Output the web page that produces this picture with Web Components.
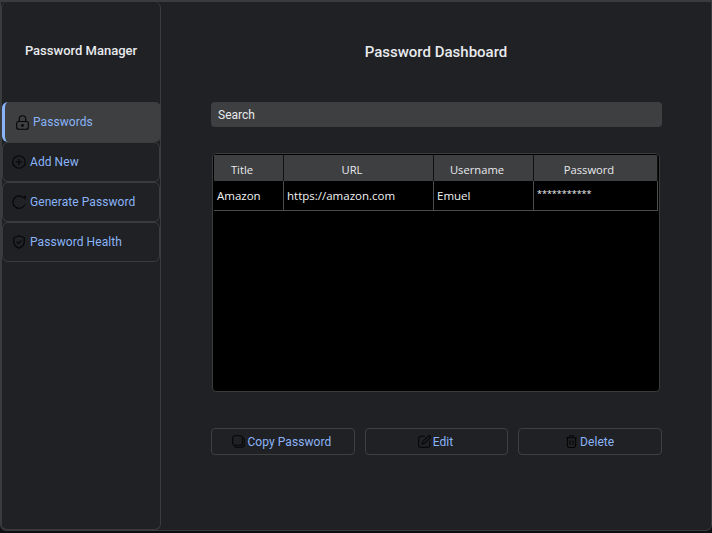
<!DOCTYPE html>
<html>
<head>
<meta charset="utf-8">
<title>Password Manager</title>
<style>
html, body { margin: 0; height: 100%; background: #0d0f12; }
body { overflow: hidden; }
</style>
</head>
<body>
<app-window>
    <side-bar slot="side" heading="Password Manager">
        <nav-item active label="Passwords" icon="lock"></nav-item>
        <nav-item label="Add New" icon="plus"></nav-item>
        <nav-item label="Generate Password" icon="refresh"></nav-item>
        <nav-item label="Password Health" icon="shield"></nav-item>
    </side-bar>
    <dash-board heading="Password Dashboard">
        <search-box placeholder="Search"></search-box>
        <password-table></password-table>
        <action-bar></action-bar>
    </dash-board>
</app-window>

<script>
const ICONS = {
    lock: '<svg width="13" height="15" viewBox="0 0 13 15"><path d="M3.2 6.5V4a3.3 3.3 0 0 1 6.6 0v2.5"/><rect x=".7" y="6.5" width="11.6" height="7.8" rx="2"/><circle cx="6.5" cy="10.4" r=".8" fill="#000"/></svg>',
    plus: '<svg width="14" height="14" viewBox="0 0 14 14"><circle cx="7" cy="7" r="6.3"/><path d="M7 4v6M4 7h6"/></svg>',
    refresh: '<svg width="14" height="14" viewBox="0 0 14 14"><path d="M12.8 9.6A6.2 6.2 0 1 1 11.4 2.6L13 1.2M13.2.6V4.4"/></svg>',
    shield: '<svg width="12" height="14" viewBox="0 0 12 14"><path d="M6 .8 11.2 2.6V7c0 3-2.2 5-5.2 6.2C3 12 .8 10 .8 7V2.6z"/><path d="M3.6 6.8 5.4 8.4 8.4 5.4"/></svg>',
    copy: '<svg width="13" height="13" viewBox="0 0 13 13"><rect x=".7" y=".7" width="9.6" height="9.6" rx="2"/><path d="M11.2 2.6c.7.4 1.1 1 1.1 1.8v5.4a2.5 2.5 0 0 1-2.5 2.5H4.4c-.8 0-1.4-.4-1.8-1.1"/></svg>',
    edit: '<svg width="13" height="13" viewBox="0 0 13 13"><path d="M7 1.2H2.6A1.9 1.9 0 0 0 .7 3.1v7.3c0 1 .9 1.9 1.9 1.9h7.3c1 0 1.9-.9 1.9-1.9V6"/><path d="M4.2 9 4.8 6.4 10.6.9c.4-.3.9-.3 1.2 0l.4.5c.3.4.3.9 0 1.2L6.6 8.3z"/></svg>',
    trash: '<svg width="11" height="13" viewBox="0 0 11 13"><path d="M.3 2.8h10.4M3.6 2.6V1.5c0-.5.3-.8.8-.8h2.2c.5 0 .8.3.8.8v1.1"/><path d="M1.4 2.8v8c0 1 .7 1.6 1.6 1.6h5c.9 0 1.6-.6 1.6-1.6v-8"/><path d="M4 5.2v4.8M7 5.2v4.8"/></svg>'
};

class AppWindow extends HTMLElement {
    constructor() {
        super();
        this.attachShadow({mode: 'open'});
        this.shadowRoot.innerHTML = `
        <style>
        :host {
            display : flex;
            box-sizing : border-box;
            width : 712px;
            height : 531px;
            background : #202124;
            border : 1px solid #3a3b3d;
            border-top-width : 2px;
            border-radius : 0 0 6px 6px;
            overflow : hidden;
            font-family : Roboto, "Liberation Sans", sans-serif;
        }
        </style>
        <slot name="side"></slot>
        <slot></slot>`;
    }
}
customElements.define('app-window', AppWindow);

class SideBar extends HTMLElement {
    constructor() {
        super();
        this.attachShadow({mode: 'open'});
        this.shadowRoot.innerHTML = `
        <style>
        :host {
            display : block;
            box-sizing : border-box;
            width : 160px;
            flex : none;
            border : 1px solid #3a3b3d;
            border-top : 0;
            border-radius : 6px;
        }
        h1 {
            margin : 0;
            height : 100px;
            box-sizing : border-box;
            padding-top : 41px;
            font-size : 13px;
            line-height : 16px;
            font-weight : 500;
            text-align : center;
            color : #e8eaed;
        }
        </style>
        <h1></h1>
        <slot></slot>`;
        this.shadowRoot.querySelector('h1').textContent = this.getAttribute('heading');
    }
}
customElements.define('side-bar', SideBar);

class NavItem extends HTMLElement {
    constructor() {
        super();
        this.attachShadow({mode: 'open'});
        this.shadowRoot.innerHTML = `
        <style>
        :host {
            display : flex;
            align-items : center;
            gap : 4px;
            box-sizing : border-box;
            height : 40px;
            padding-left : 9px;
            color : #8ab4f8;
            font-size : 12px;
            letter-spacing : 0.07px;
            border : 1px solid #3a3b3d;
            border-radius : 6px;
        }
        :host([active]) {
            background : #3e3f41;
            border : 0;
            border-left : 3px solid #8ab4f8;
            padding-left : 10px;
            margin-right : -1px;
        }
        .icon {
            display : flex;
            justify-content : center;
            width : 14px;
            flex : none;
        }
        svg {
            display : block;
            fill : none;
            stroke : #050506;
            stroke-width : 1.1;
        }
        </style>
        <span class="icon"></span>
        <span class="label"></span>`;
        this.shadowRoot.querySelector('.icon').innerHTML = ICONS[this.getAttribute('icon')];
        this.shadowRoot.querySelector('.label').textContent = this.getAttribute('label');
    }
}
customElements.define('nav-item', NavItem);

class DashBoard extends HTMLElement {
    constructor() {
        super();
        this.attachShadow({mode: 'open'});
        this.shadowRoot.innerHTML = `
        <style>
        :host {
            display : flex;
            flex-direction : column;
            flex : 1;
            box-sizing : border-box;
            padding : 0 49px 0 50px;
        }
        h2 {
            margin : 0;
            height : 100px;
            box-sizing : border-box;
            padding-top : 41px;
            padding-right : 1px;
            font-size : 15px;
            line-height : 18px;
            font-weight : 500;
            text-align : center;
            color : #e8eaed;
        }
        </style>
        <h2></h2>
        <slot></slot>`;
        this.shadowRoot.querySelector('h2').textContent = this.getAttribute('heading');
    }
}
customElements.define('dash-board', DashBoard);

class SearchBox extends HTMLElement {
    constructor() {
        super();
        this.attachShadow({mode: 'open'});
        this.shadowRoot.innerHTML = `
        <style>
        :host {
            display : flex;
            align-items : center;
            box-sizing : border-box;
            height : 25px;
            padding-left : 7px;
            background : #3e3f41;
            border-radius : 4px;
            font-size : 12px;
            color : #e8eaed;
        }
        </style>
        <span></span>`;
        this.shadowRoot.querySelector('span').textContent = this.getAttribute('placeholder');
    }
}
customElements.define('search-box', SearchBox);

class PasswordTable extends HTMLElement {
    constructor() {
        super();
        this.attachShadow({mode: 'open'});
        this.shadowRoot.innerHTML = `
        <style>
        :host {
            display : block;
            box-sizing : border-box;
            height : 239px;
            margin : 26px 2px 0 1px;
            padding : 1px;
            background : #000;
            border : 1px solid #3a3b3d;
            border-radius : 4px;
            overflow : hidden;
            font-family : "Open Sans", "Liberation Sans", sans-serif;
            font-size : 11.5px;
        }
        .row {
            display : grid;
            grid-template-columns : 70px 150px 100px 124px;
        }
        .head > div {
            height : 26px;
            line-height : 29px;
            padding-right : 13px;
            font-size : 11.2px;
            text-align : center;
            background : #3e3f41;
            color : #e8eaed;
            border-right : 1px solid #111;
            box-sizing : border-box;
        }
        .body > div {
            height : 30px;
            line-height : 30px;
            padding-left : 3px;
            box-sizing : border-box;
            color : #f1f3f4;
            border-right : 1px solid #4a4b4d;
            border-bottom : 1px solid #4a4b4d;
        }
        .body > div.secret {
            font-size : 9px;
            line-height : 25px;
        }
        </style>
        <div class="row head"><div>Title</div><div>URL</div><div>Username</div><div>Password</div></div>
        <div class="row body"><div>Amazon</div><div>https://amazon.com</div><div>Emuel</div><div class="secret">***********</div></div>`;
    }
}
customElements.define('password-table', PasswordTable);

class ActionButton extends HTMLElement {
    constructor() {
        super();
        this.attachShadow({mode: 'open'});
        this.shadowRoot.innerHTML = `
        <style>
        :host {
            display : flex;
            align-items : center;
            justify-content : center;
            gap : 2px;
            box-sizing : border-box;
            height : 27px;
            padding-right : 2px;
            color : #8ab4f8;
            font-size : 12px;
            letter-spacing : 0.07px;
            border : 1px solid #3f4042;
            border-radius : 4px;
        }
        :host([icon="trash"]) {
            gap : 3px;
            padding-right : 0;
        }
        svg {
            display : block;
            fill : none;
            stroke : #050506;
            stroke-width : 1.05;
        }
        </style>
        <span class="icon"></span>
        <span class="label"></span>`;
        this.shadowRoot.querySelector('.icon').innerHTML = ICONS[this.getAttribute('icon')];
        this.shadowRoot.querySelector('.label').textContent = this.getAttribute('label');
    }
}
customElements.define('action-button', ActionButton);

class ActionBar extends HTMLElement {
    constructor() {
        super();
        this.attachShadow({mode: 'open'});
        this.shadowRoot.innerHTML = `
        <style>
        :host {
            display : grid;
            grid-template-columns : repeat(3, 1fr);
            gap : 10px;
            margin-top : 36px;
        }
        </style>
        <action-button icon="copy" label="Copy Password"></action-button>
        <action-button icon="edit" label="Edit"></action-button>
        <action-button icon="trash" label="Delete"></action-button>`;
    }
}
customElements.define('action-bar', ActionBar);
</script>
</body>
</html>
